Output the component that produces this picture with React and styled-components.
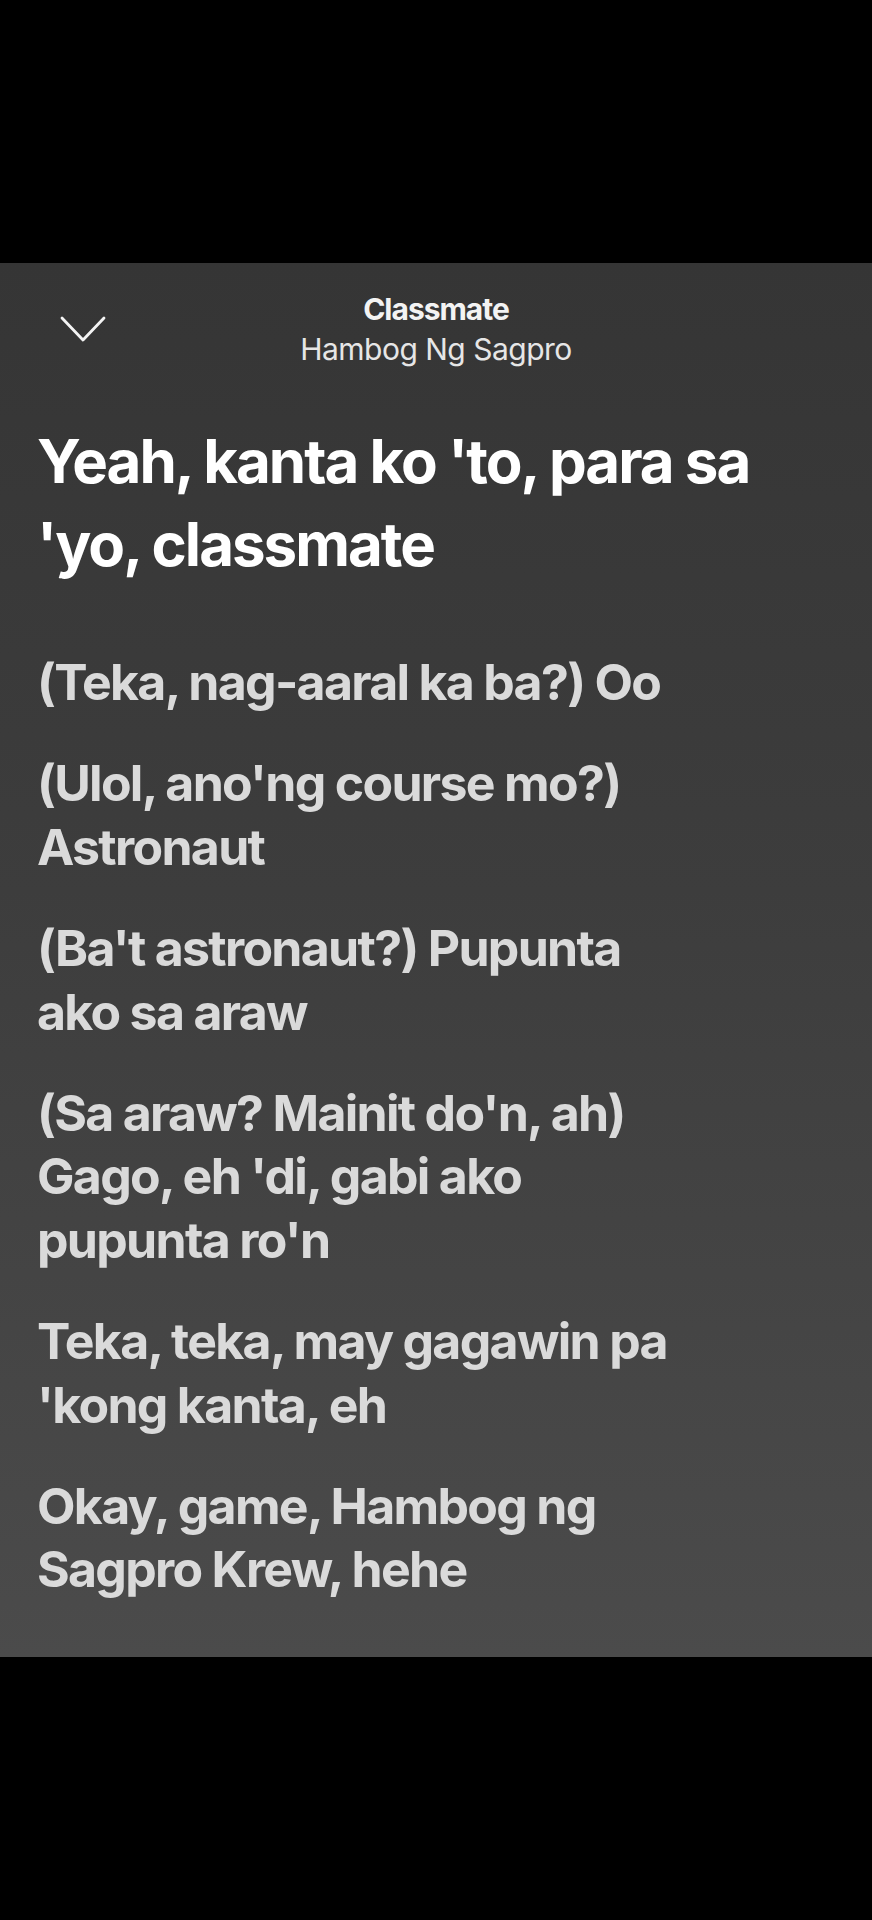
import React from 'react';
import styled, { createGlobalStyle } from 'styled-components';

const GlobalStyle = createGlobalStyle`
    html, body {
        margin: 0;
        padding: 0;
        background: #000;
    }
    body {
        font-family: Inter, "Noto Sans", "DejaVu Sans", sans-serif;
        -webkit-font-smoothing: antialiased;
    }
`;

const Page = styled.div`
    width: 872px;
    height: 1920px;
    background: #000;
    display: flex;
    flex-direction: column;
    justify-content: center;
`;

const Panel = styled.div`
    height: 1394px;
    overflow: hidden;
    background: linear-gradient(180deg, #353535 0%, #3d3d3d 45%, #4b4b4b 100%);
    display: flex;
    flex-direction: column;
`;

const Header = styled.header`
    display: grid;
    grid-template-columns: 1fr auto 1fr;
    align-items: center;
    padding: 26px 60px 0;
`;

const CloseButton = styled.button`
    justify-self: start;
    display: flex;
    padding: 0;
    border: none;
    background: none;
    cursor: pointer;
`;

const TrackInfo = styled.div`
    display: flex;
    flex-direction: column;
    align-items: center;
    color: #f3f3f3;
    font-size: 30px;
    line-height: 40px;
`;

const TrackTitle = styled.div`
    font-weight: 700;
    letter-spacing: -1px;
`;

const TrackArtist = styled.div`
    font-weight: 400;
    color: #e6e6e6;
    letter-spacing: -0.5px;
`;

const Lyrics = styled.div`
    display: flex;
    flex-direction: column;
    padding: 51px 0 0 37px;
`;

const Line = styled.p`
    margin: 0 0 ${props => (props.active ? '65px' : '38px')};
    max-width: ${props => (props.active ? '730px' : '665px')};
    font-weight: 700;
    font-size: ${props => (props.active ? '60px' : '50px')};
    line-height: ${props => (props.active ? '83px' : '63.4px')};
    letter-spacing: ${props => (props.active ? '-2px' : '-1.7px')};
    color: ${props => (props.active ? '#ffffff' : '#dadada')};
`;

const ChevronDown = () => (
    <svg width="46" height="26" viewBox="0 0 46 26" fill="none">
        <polyline points="2,2 23,24 44,2" stroke="#f4f4f4" strokeWidth="2.8"
            strokeLinecap="round" strokeLinejoin="round" />
    </svg>
);

const lines = [
    "Yeah, kanta ko 'to, para sa 'yo, classmate",
    '(Teka, nag-aaral ka ba?) Oo',
    "(Ulol, ano'ng course mo?) Astronaut",
    "(Ba't astronaut?) Pupunta ako sa araw",
    "(Sa araw? Mainit do'n, ah) Gago, eh 'di, gabi ako pupunta ro'n",
    "Teka, teka, may gagawin pa 'kong kanta, eh",
    'Okay, game, Hambog ng Sagpro Krew, hehe'
];

const App = () => (
    <Page>
        <GlobalStyle />
        <Panel>
            <Header>
                <CloseButton aria-label="Close">
                    <ChevronDown />
                </CloseButton>
                <TrackInfo>
                    <TrackTitle>Classmate</TrackTitle>
                    <TrackArtist>Hambog Ng Sagpro</TrackArtist>
                </TrackInfo>
                <div />
            </Header>
            <Lyrics>
                {lines.map((text, i) => (
                    <Line key={i} active={i === 0}>{text}</Line>
                ))}
            </Lyrics>
        </Panel>
    </Page>
);

export default App;
